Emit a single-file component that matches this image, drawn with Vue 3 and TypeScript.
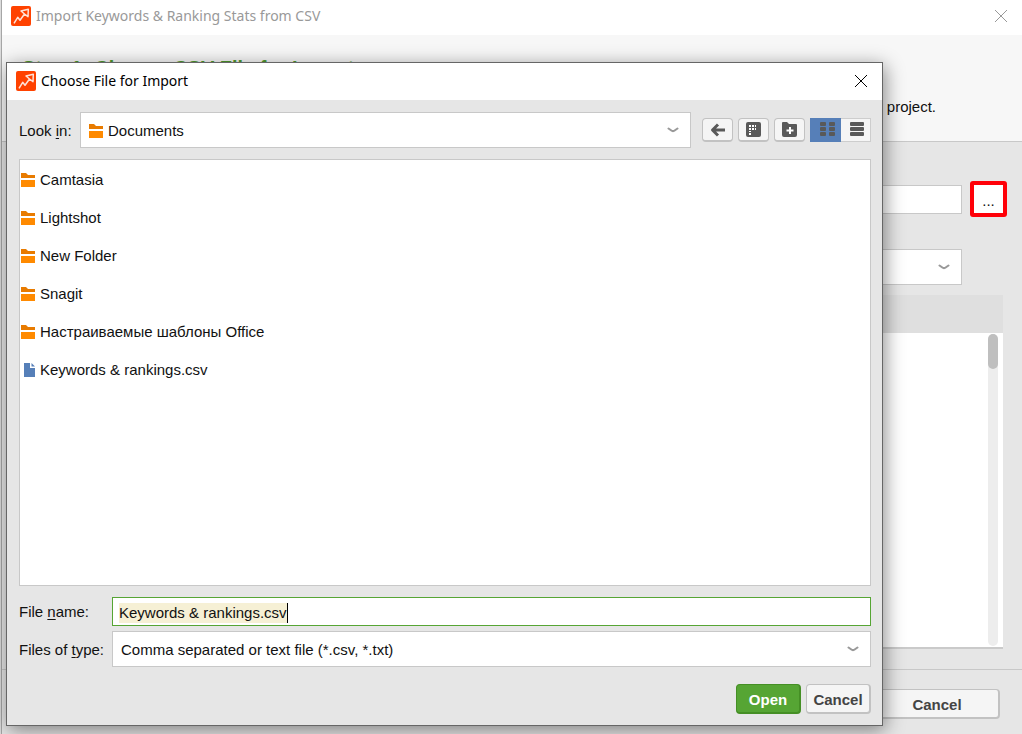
<script setup lang="ts">
import { ref } from 'vue'

interface Entry {
  name: string
  kind: 'folder' | 'file'
}

const entries: Entry[] = [
  { name: 'Camtasia', kind: 'folder' },
  { name: 'Lightshot', kind: 'folder' },
  { name: 'New Folder', kind: 'folder' },
  { name: 'Snagit', kind: 'folder' },
  { name: 'Настраиваемые шаблоны Office', kind: 'folder' },
  { name: 'Keywords & rankings.csv', kind: 'file' },
]

const chevron = 'M1.500 1.500 4 3.300Q6 5 8 3.300L10.500 1.500'
const fileName = ref('Keywords & rankings.csv')
const path = ref('')
const view = ref<'list' | 'details'>('list')
</script>

<template>
  <div class="desktop">
    <main class="window">
      <header class="titlebar">
        <svg class="logo" viewBox="0 0 20 20" aria-hidden="true">
          <rect width="20" height="20" rx="2" fill="#ff4200" />
          <path d="M3 17.300 6.700 11.300 9 14.300 13.500 8 10 5 17.300 3.300 17 10.700 13.500 8" fill="none" stroke="#ffe3d8" stroke-width="1.500" stroke-linejoin="round" />
        </svg>
        <span class="title muted">Import Keywords &amp; Ranking Stats from CSV</span>
        <button class="close muted" aria-label="Close window">
          <svg viewBox="0 0 14 14"><path d="M1 1 13 13M13 1 1 13" /></svg>
        </button>
      </header>

      <section class="intro">
        <h1>Step 1: Choose CSV File for Import</h1>
        <p>Select a CSV file with the keywords and ranking stats to be imported to your project.</p>
      </section>

      <section class="form">
        <div class="path-row">
          <input v-model="path" class="box path" aria-label="CSV file path" />
          <button class="browse" aria-label="Browse">...</button>
        </div>
        <div class="select-wrap encoding">
          <select class="box" aria-label="Encoding"><option></option></select>
          <svg class="chevron" viewBox="0 0 12 6"><path :d="chevron" /></svg>
        </div>
        <div class="preview">
          <div class="preview-head"></div>
          <div class="preview-body">
            <div class="track"><div class="thumb"></div></div>
          </div>
        </div>
      </section>

      <footer class="actions">
        <button class="btn wide">Cancel</button>
      </footer>
    </main>

    <section class="dialog" role="dialog" aria-labelledby="dialog-title">
      <header class="titlebar">
        <svg class="logo" viewBox="0 0 20 20" aria-hidden="true">
          <rect width="20" height="20" rx="2" fill="#ff4200" />
          <path d="M3 17.300 6.700 11.300 9 14.300 13.500 8 10 5 17.300 3.300 17 10.700 13.500 8" fill="none" stroke="#ffe3d8" stroke-width="1.500" stroke-linejoin="round" />
        </svg>
        <span id="dialog-title" class="title">Choose File for Import</span>
        <button class="close" aria-label="Close">
          <svg viewBox="0 0 14 14"><path d="M1 1 13 13M13 1 1 13" /></svg>
        </button>
      </header>

      <div class="chooser">
        <div class="look-row">
          <label for="look-in">Look <u>i</u>n:</label>
          <div class="select-wrap look">
            <svg class="folder" viewBox="0 0 14 14">
              <path d="M0 0H5L7 2H14V5H0Z" fill="#e87b00" /><path d="M0 7H14V14H0Z" fill="#ff8a00" />
            </svg>
            <select id="look-in" class="box"><option>Documents</option></select>
            <svg class="chevron" viewBox="0 0 12 6"><path :d="chevron" /></svg>
          </div>
          <div class="tools">
            <button class="tool" aria-label="Back">
              <svg viewBox="0 0 16 16"><path d="M15 8H4M8 2.500 2.500 8 8 13.500" fill="none" stroke="#595959" stroke-width="3" stroke-linejoin="round" /></svg>
            </button>
            <button class="tool" aria-label="Desktop">
              <svg viewBox="0 0 16 16">
                <rect width="15" height="15" rx="2" fill="#595959" />
                <path d="M3 3h2v2H3zM6 3h2v2H6zM9 3h1v2H9zM3 6h2v2H3zM6 6h2v2H6zM9 6h1v2H9zM3 9h2v1H3zM3 11h2v2H3z" fill="#fff" />
              </svg>
            </button>
            <button class="tool" aria-label="Create new folder">
              <svg viewBox="0 0 16 16">
                <path d="M0 1Q0 0 1 0H5L7 2H14Q15 2 15 3V13Q15 15 13 15H2Q0 15 0 13Z" fill="#595959" />
                <path d="M8 5V12M4.500 8.500H11.500" stroke="#fff" stroke-width="2" />
              </svg>
            </button>
            <div class="views">
              <button :class="{ on: view === 'list' }" aria-label="List view" @click="view = 'list'">
                <svg viewBox="0 0 16 16" fill="#595959">
                  <rect v-for="n in 6" :key="n" :x="n % 2 ? 1 : 10" :y="5 * Math.floor((n - 1) / 2)" width="6" height="4" rx="1" />
                </svg>
              </button>
              <button :class="{ on: view === 'details' }" aria-label="Details view" @click="view = 'details'">
                <svg viewBox="0 0 16 16" fill="#595959">
                  <rect v-for="n in 3" :key="n" x="2" :y="5 * n - 5" width="14" height="4" rx="1" />
                </svg>
              </button>
            </div>
          </div>
        </div>

        <ul class="files">
          <li v-for="entry in entries" :key="entry.name">
            <svg v-if="entry.kind === 'folder'" class="folder" viewBox="0 0 14 14">
              <path d="M0 0H5L7 2H14V5H0Z" fill="#e87b00" /><path d="M0 7H14V14H0Z" fill="#ff8a00" />
            </svg>
            <svg v-else class="folder" viewBox="0 0 14 14">
              <path d="M3 0H9V5H14V14H3Z" fill="#567fb8" /><path d="M10.500 0V3.500H14Z" fill="#567fb8" />
            </svg>
            <span>{{ entry.name }}</span>
          </li>
        </ul>

        <div class="fields">
          <label for="file-name">File <u>n</u>ame:</label>
          <div class="name-box"><input id="file-name" v-model="fileName" /></div>
          <label for="file-type">Files of <u>t</u>ype:</label>
          <div class="select-wrap">
            <select id="file-type" class="box"><option>Comma separated or text file (*.csv, *.txt)</option></select>
            <svg class="chevron" viewBox="0 0 12 6"><path :d="chevron" /></svg>
          </div>
        </div>

        <div class="dialog-actions">
          <button class="btn primary">Open</button>
          <button class="btn">Cancel</button>
        </div>
      </div>
    </section>
  </div>
</template>

<style scoped>
.desktop {
  position: relative;
  min-height: 100vh;
  display: flex;
  background: #dcdcdc;
  padding-left: 1px;
  box-sizing: border-box;
  overflow: hidden;
  font: 15px/20px "Liberation Sans", Arial, sans-serif;
  color: #111;
}
.desktop * { box-sizing: border-box; }
button, input, select { font: inherit; color: inherit; margin: 0; }
button { padding: 0; cursor: pointer; }
u { text-underline-offset: 2px; }

.window {
  flex: 1;
  min-width: 0;
  display: flex;
  flex-direction: column;
  border-left: 1px solid #a6a6a6;
  background: #e6e6e6;
}
.titlebar {
  display: flex;
  align-items: center;
  gap: 5px;
  height: 35px;
  padding: 0 14px 3px 9px;
  background: #fff;
}
.logo { width: 20px; height: 20px; flex: none; }
.title { flex: 1; font: 14px/20px "Noto Sans", "Open Sans", sans-serif; color: #000; }
.title.muted { color: #999; }
.close { display: flex; border: 0; background: none; }
.close svg { width: 14px; height: 14px; fill: none; stroke: #000; stroke-width: 1; }
.close.muted svg { stroke: #999; }

.intro {
  height: 107px;
  padding: 19px 20px 0;
  background: #f7f7f7;
  border-bottom: 1px solid #c8c8c8;
}
.intro h1 { margin: 0; font-size: 20px; line-height: 28px; color: #4f9a2d; }
.intro p { margin: 15px 66px 0 0; text-align: right; }

.form {
  flex: 1;
  display: flex;
  flex-direction: column;
  padding: 39px 19px 20px 18px;
}
.path-row { display: flex; align-items: center; gap: 8px; padding-right: 15px; margin-right: -19px; }
.box {
  width: 100%;
  height: 36px;
  border: 1px solid #c8c8c8;
  border-radius: 0;
  background: #fff;
  padding: 2px 8px 0;
  appearance: none;
  outline: 0;
}
.box.path { flex: 1; height: 29px; }
.browse {
  width: 37px;
  height: 36px;
  padding-top: 4px;
  border: 4px solid #ff0008;
  border-radius: 3px;
  background: #fff;
}
.select-wrap { position: relative; display: flex; }
.chevron {
  position: absolute;
  right: 12px;
  top: 15px;
  width: 12px;
  height: 6px;
  fill: none;
  stroke: #999;
  stroke-width: 2;
  stroke-linecap: round;
  pointer-events: none;
}
.encoding { margin: 32px 41px 0 0; }
.preview { flex: 1; display: flex; flex-direction: column; margin-top: 10px; border-bottom: 2px solid #cacaca; }
.preview-head { height: 38px; background: #dfdfdf; }
.preview-body { flex: 1; display: flex; justify-content: flex-end; padding: 1px 5px 1px 0; background: #fff; }
.track { width: 10px; border-radius: 5px; background: #ededed; }
.thumb { height: 35px; border-radius: 5px; background: #bfbfbf; }
.actions {
  display: flex;
  justify-content: flex-end;
  height: 65px;
  padding: 19px 22px 0 0;
  border-top: 1px solid #c8c8c8;
}
.btn {
  min-width: 65px;
  height: 30px;
  padding-top: 2px;
  border: 1px solid #c2c2c2;
  border-width: 1px 2px 2px 1px;
  border-radius: 4px;
  background: #f5f5f5;
  color: #444;
  font-weight: bold;
}
.btn.wide { width: 125px; }
.btn.primary { background: #56a534; border-color: #458f25; color: #fff; }

.dialog {
  position: absolute;
  inset: 62px 139px 8px 6px;
  display: flex;
  flex-direction: column;
  border: 1px solid #666;
  background: #e6e6e6;
  box-shadow: 2px 4px 18px rgba(0, 0, 0, 0.45);
}
.dialog .titlebar { height: 37px; padding-bottom: 1px; }
.chooser {
  flex: 1;
  display: flex;
  flex-direction: column;
  padding: 12px 11px 11px 12px;
}
.look-row { display: flex; align-items: center; }
.look-row label { width: 61px; }
label { padding-top: 1px; }
.look { flex: 1; margin-right: 11px; }
.look .box { padding-left: 27px; }
.folder { width: 14px; height: 14px; flex: none; }
.look .folder { position: absolute; left: 9px; top: 12px; pointer-events: none; }
.tools { display: flex; gap: 5px; align-items: center; }
.tool {
  display: flex;
  align-items: center;
  justify-content: center;
  width: 31px;
  height: 24px;
  border: 1px solid #c2c2c2;
  border-bottom-width: 2px;
  border-radius: 4px;
  background: #f5f5f5;
}
.tools svg { width: 16px; height: 16px; }
.views { display: flex; }
.views button {
  display: flex;
  align-items: center;
  justify-content: center;
  width: 30px;
  height: 24px;
  border: 1px solid #cdcdcd;
  border-left: 0;
  background: #f5f5f5;
}
.views button.on { width: 31px; padding-left: 3px; border-color: #567fb8; background: #567fb8; }

.files {
  flex: 1;
  margin: 11px 0;
  padding: 1px;
  list-style: none;
  border: 1px solid #c8c8c8;
  background: #fff;
}
.files li { display: flex; align-items: center; gap: 5px; height: 38px; }

.fields { display: grid; grid-template-columns: 88px 1fr; column-gap: 5px; row-gap: 5px; align-items: center; }
.name-box { display: flex; align-items: center; height: 29px; padding: 2px 6px 0; border: 1px solid #56a534; background: #fff; }
.name-box input {
  field-sizing: content;
  height: 20px;
  padding: 0;
  border: 0;
  border-right: 1px solid #000;
  background: #f6f0d5;
  outline: 0;
}
.dialog-actions { display: flex; justify-content: flex-end; gap: 5px; margin-top: 17px; }
</style>

<style>
body { margin: 0; }
</style>
